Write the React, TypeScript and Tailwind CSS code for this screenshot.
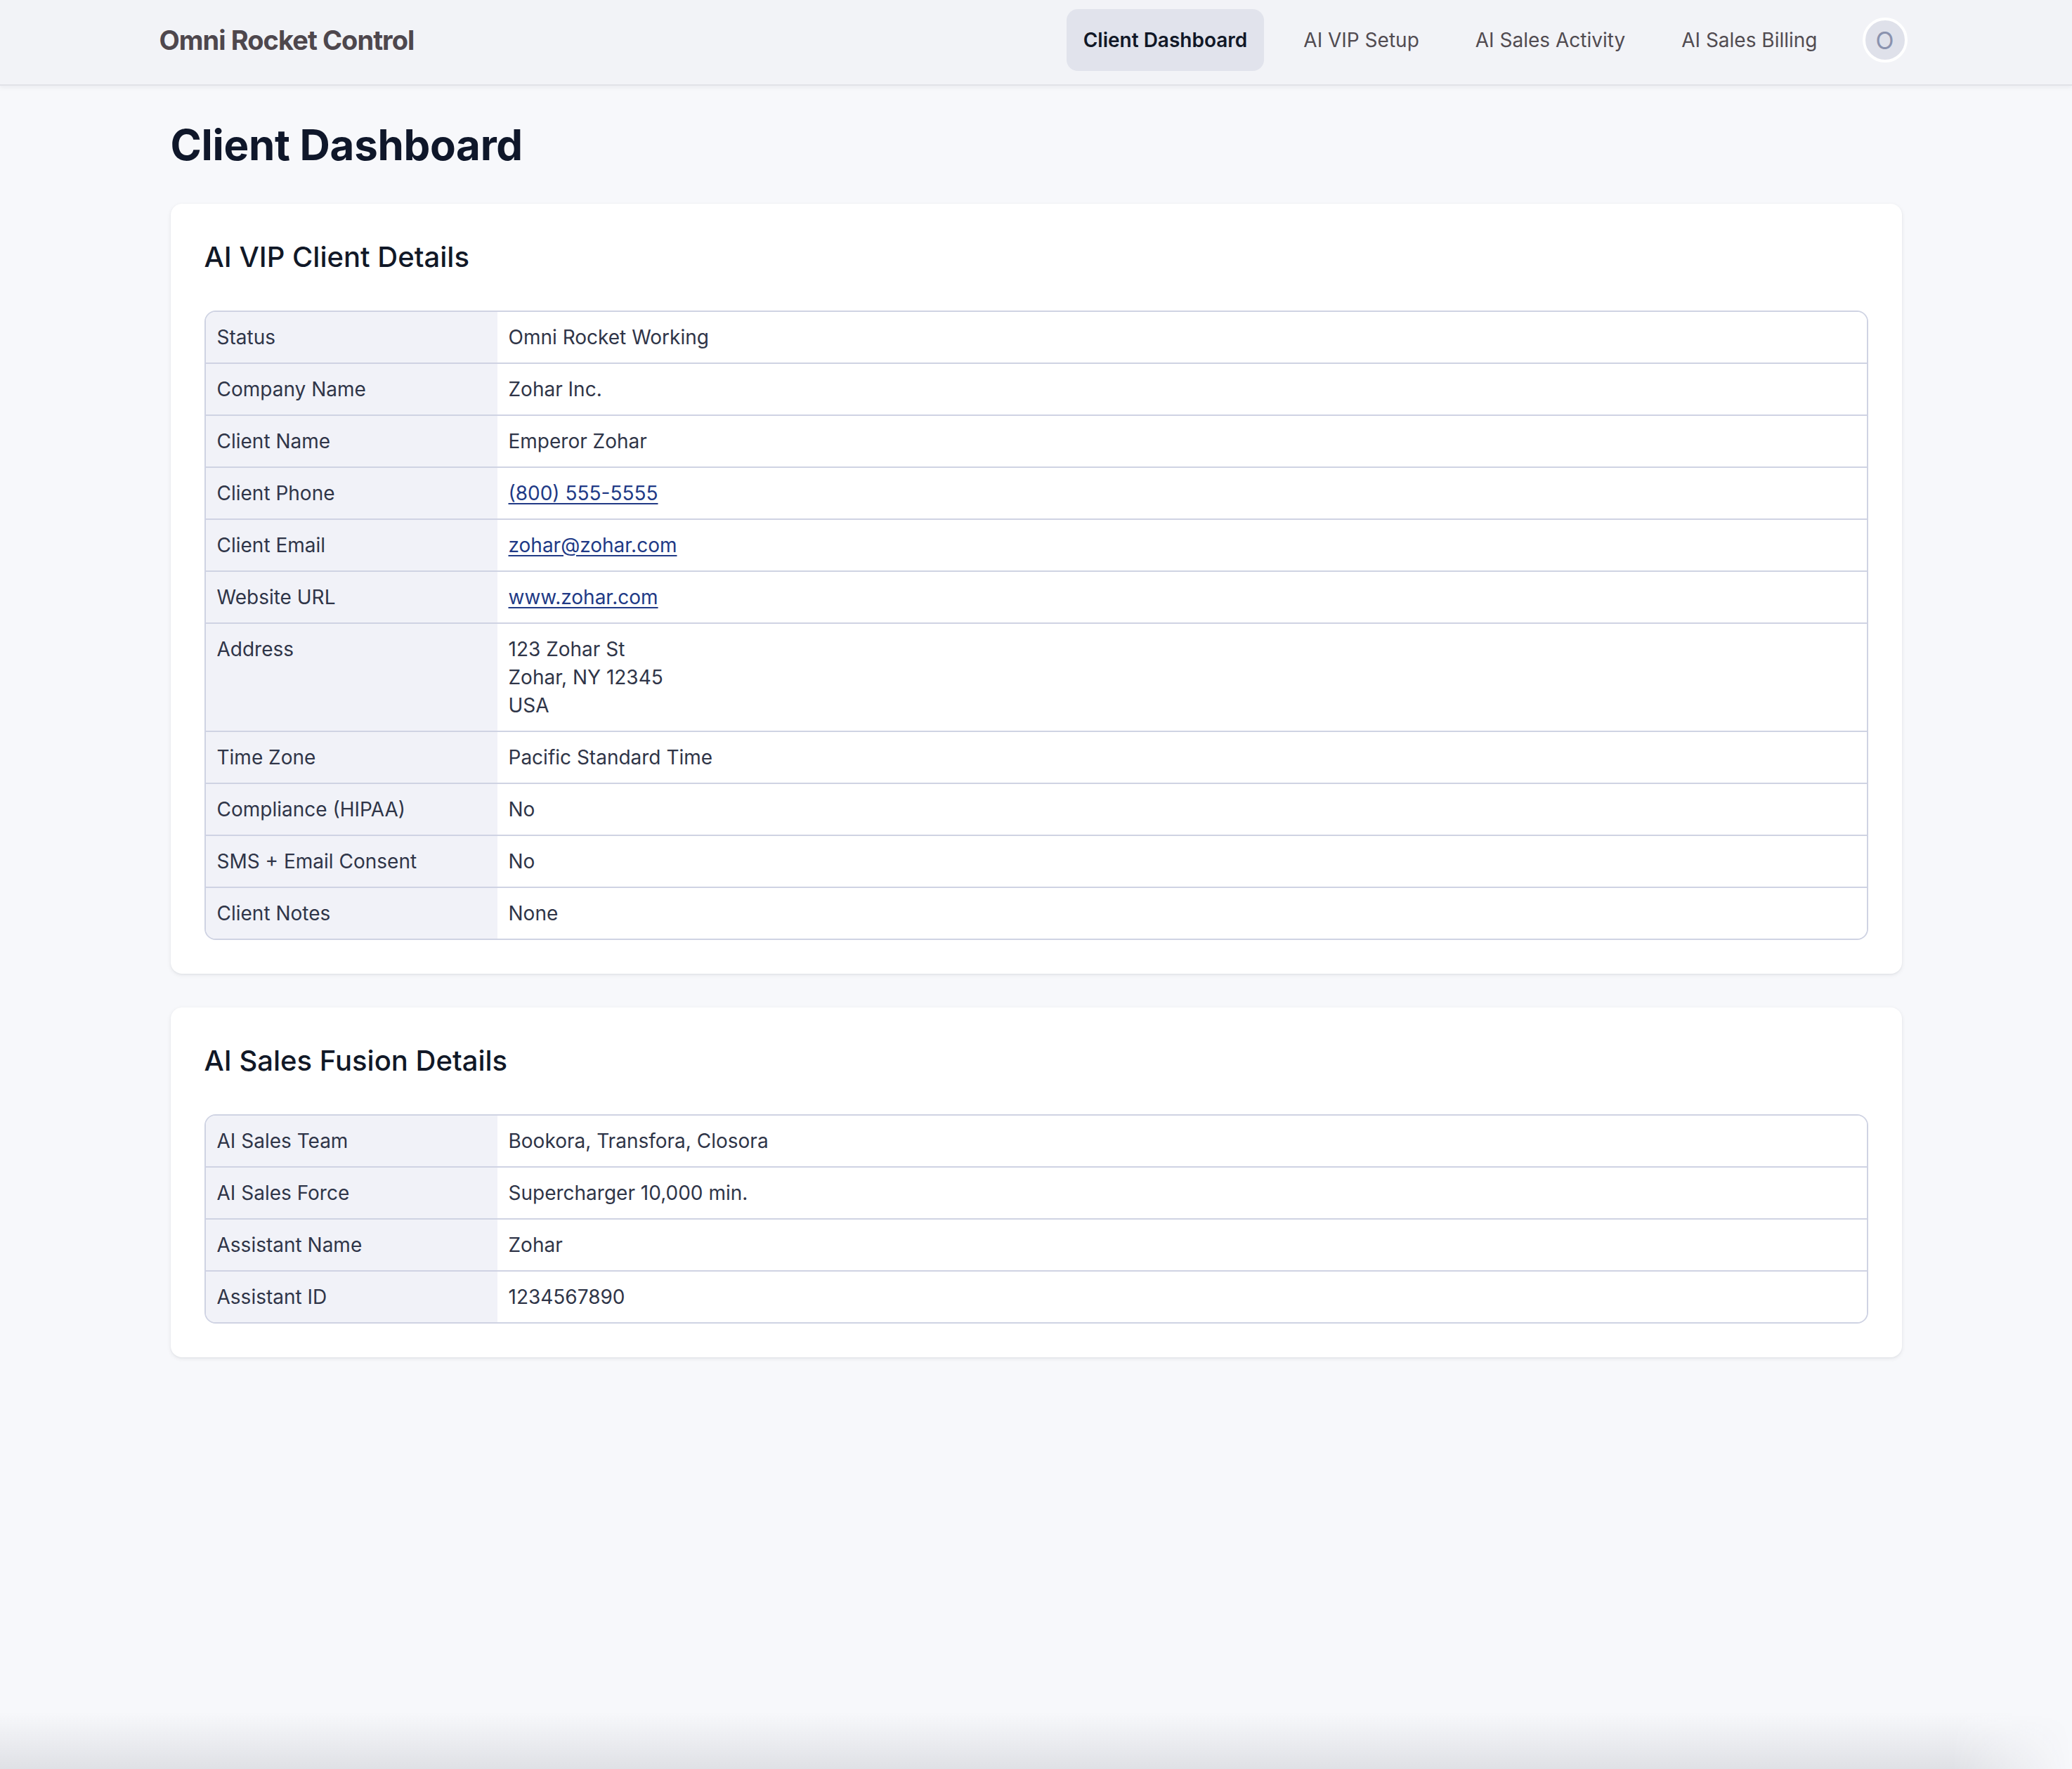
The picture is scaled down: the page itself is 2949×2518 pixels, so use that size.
import React from "react";

type Row = { label: string; value: React.ReactNode };

const link = "text-[#213a86] underline decoration-[2px] underline-offset-[4px]";

const vipRows: Row[] = [
  { label: "Status", value: "Omni Rocket Working" },
  { label: "Company Name", value: "Zohar Inc." },
  { label: "Client Name", value: "Emperor Zohar" },
  { label: "Client Phone", value: <a className={link} href="#">(800) 555-5555</a> },
  { label: "Client Email", value: <a className={link} href="#">zohar@zohar.com</a> },
  { label: "Website URL", value: <a className={link} href="#">www.zohar.com</a> },
  {
    label: "Address",
    value: (
      <div className="flex flex-col">
        <span>123 Zohar St</span>
        <span>Zohar, NY 12345</span>
        <span>USA</span>
      </div>
    ),
  },
  { label: "Time Zone", value: "Pacific Standard Time" },
  { label: "Compliance (HIPAA)", value: "No" },
  { label: "SMS + Email Consent", value: "No" },
  { label: "Client Notes", value: "None" },
];

const fusionRows: Row[] = [
  { label: "AI Sales Team", value: "Bookora, Transfora, Closora" },
  { label: "AI Sales Force", value: "Supercharger 10,000 min." },
  { label: "Assistant Name", value: "Zohar" },
  { label: "Assistant ID", value: "1234567890" },
];

function DetailTable({ rows }: { rows: Row[] }) {
  return (
    <div className="border-2 border-[#cfd3e3] rounded-[16px] overflow-hidden">
      {rows.map((r, i) => (
        <div
          key={r.label}
          className={
            i < rows.length - 1
              ? "flex border-b-2 border-[#cfd3e3]"
              : "flex"
          }
        >
          <div className="w-[415px] shrink-0 bg-[#f1f2f8] px-[16px] py-[16px] text-[28px] leading-[40px] text-[#2f3548]">
            {r.label}
          </div>
          <div className="flex-1 bg-white px-[16px] py-[16px] text-[28px] leading-[40px] text-[#2f3548]">
            {r.value}
          </div>
        </div>
      ))}
    </div>
  );
}

function Card({ title, rows }: { title: string; rows: Row[] }) {
  return (
    <section className="bg-white rounded-[16px] p-[48px] shadow-[0_2px_6px_rgba(15,23,42,0.07),0_1px_3px_rgba(15,23,42,0.05)]">
      <h2 className="text-[40px] leading-[56px] font-medium text-[#111827] mb-[48px]">{title}</h2>
      <DetailTable rows={rows} />
    </section>
  );
}

export default function App() {
  const navItems = ["AI VIP Setup", "AI Sales Activity", "AI Sales Billing"];
  return (
    <div
      className="relative min-h-screen bg-[#f7f8fb] overflow-hidden"
      style={{ fontFamily: "Inter, 'Noto Sans', 'Liberation Sans', sans-serif" }}
    >
      <header className="h-[122px] bg-[#f2f3f7] border-b-2 border-[#e1e2e8] shadow-[0_3px_6px_rgba(15,23,42,0.05)]">
        <div className="max-w-[2560px] mx-auto px-[32px] h-full pb-[6px] flex items-center justify-between">
          <div className="text-[38px] font-bold text-[#4e474d] tracking-[-0.95px]">Omni Rocket Control</div>
          <nav className="flex items-center gap-[32px]">
            <a
              href="#"
              className="h-[88px] px-[24px] flex items-center rounded-[16px] bg-[#e1e3ec] text-[28px] font-semibold text-[#111827]"
            >
              Client Dashboard
            </a>
            {navItems.map((n) => (
              <a
                key={n}
                href="#"
                className="h-[88px] px-[24px] flex items-center rounded-[16px] text-[28px] text-[#514b51]"
              >
                {n}
              </a>
            ))}
            <div className="mx-[8px] w-[64px] h-[64px] rounded-full border-[4px] border-white bg-[#dfe1ea] flex items-center justify-center text-[34px] text-[#8a92ae]">
              O
            </div>
          </nav>
        </div>
      </header>

      <main className="max-w-[2560px] mx-auto px-[48px] py-[48px]">
        <h1 className="text-[60px] leading-[72px] font-bold text-[#0f172a] mb-[48px] tracking-[-0.3px]">Client Dashboard</h1>
        <div className="flex flex-col gap-[48px]">
          <Card title="AI VIP Client Details" rows={vipRows} />
          <Card title="AI Sales Fusion Details" rows={fusionRows} />
        </div>
      </main>

      <div className="pointer-events-none absolute left-0 bottom-0 w-full h-[80px] bg-[linear-gradient(to_bottom,rgba(40,44,60,0),rgba(40,44,60,0.11))] [mask-image:linear-gradient(to_left,transparent_0px,black_170px)]" />
    </div>
  );
}
